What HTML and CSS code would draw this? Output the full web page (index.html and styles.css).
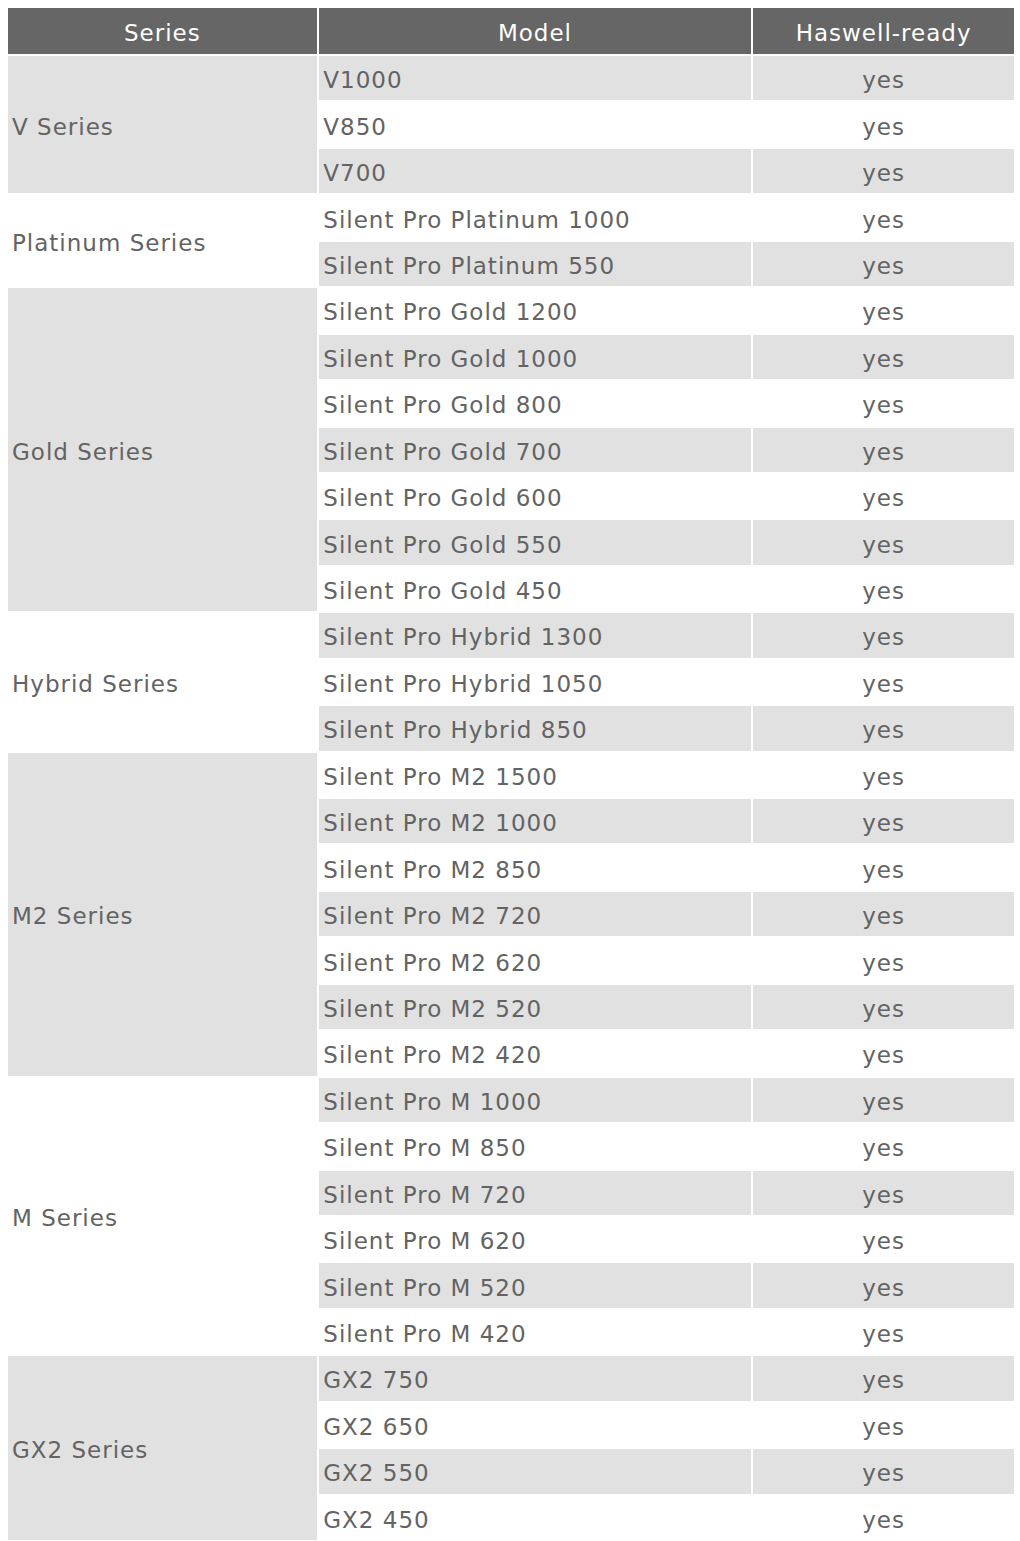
FILE: index.html
```html
<!DOCTYPE html>
<html>
<head>
<meta charset="utf-8">
<link rel="stylesheet" href="styles.css">
</head>
<body>
<div class="tbl">
  <div class="th">Series</div><div class="th">Model</div><div class="th">Haswell-ready</div>

  <div class="series gray s3">V Series</div>
  <div class="model gray">V1000</div><div class="yes gray">yes</div>
  <div class="model">V850</div><div class="yes">yes</div>
  <div class="model gray">V700</div><div class="yes gray">yes</div>

  <div class="series s2">Platinum Series</div>
  <div class="model">Silent Pro Platinum 1000</div><div class="yes">yes</div>
  <div class="model gray">Silent Pro Platinum 550</div><div class="yes gray">yes</div>

  <div class="series gray s7">Gold Series</div>
  <div class="model">Silent Pro Gold 1200</div><div class="yes">yes</div>
  <div class="model gray">Silent Pro Gold 1000</div><div class="yes gray">yes</div>
  <div class="model">Silent Pro Gold 800</div><div class="yes">yes</div>
  <div class="model gray">Silent Pro Gold 700</div><div class="yes gray">yes</div>
  <div class="model">Silent Pro Gold 600</div><div class="yes">yes</div>
  <div class="model gray">Silent Pro Gold 550</div><div class="yes gray">yes</div>
  <div class="model">Silent Pro Gold 450</div><div class="yes">yes</div>

  <div class="series s3">Hybrid Series</div>
  <div class="model gray">Silent Pro Hybrid 1300</div><div class="yes gray">yes</div>
  <div class="model">Silent Pro Hybrid 1050</div><div class="yes">yes</div>
  <div class="model gray">Silent Pro Hybrid 850</div><div class="yes gray">yes</div>

  <div class="series gray s7">M2 Series</div>
  <div class="model">Silent Pro M2 1500</div><div class="yes">yes</div>
  <div class="model gray">Silent Pro M2 1000</div><div class="yes gray">yes</div>
  <div class="model">Silent Pro M2 850</div><div class="yes">yes</div>
  <div class="model gray">Silent Pro M2 720</div><div class="yes gray">yes</div>
  <div class="model">Silent Pro M2 620</div><div class="yes">yes</div>
  <div class="model gray">Silent Pro M2 520</div><div class="yes gray">yes</div>
  <div class="model">Silent Pro M2 420</div><div class="yes">yes</div>

  <div class="series s6">M Series</div>
  <div class="model gray">Silent Pro M 1000</div><div class="yes gray">yes</div>
  <div class="model">Silent Pro M 850</div><div class="yes">yes</div>
  <div class="model gray">Silent Pro M 720</div><div class="yes gray">yes</div>
  <div class="model">Silent Pro M 620</div><div class="yes">yes</div>
  <div class="model gray">Silent Pro M 520</div><div class="yes gray">yes</div>
  <div class="model">Silent Pro M 420</div><div class="yes">yes</div>

  <div class="series gray s4">GX2 Series</div>
  <div class="model gray">GX2 750</div><div class="yes gray">yes</div>
  <div class="model">GX2 650</div><div class="yes">yes</div>
  <div class="model gray">GX2 550</div><div class="yes gray">yes</div>
  <div class="model">GX2 450</div><div class="yes">yes</div>
</div>
</body>
</html>
```

FILE: styles.css
```css
html, body {
  margin: 0;
  padding: 0;
  background: #ffffff;
}
body {
  padding: 8px 0 0 8px;
  font-family: "DejaVu Sans", Verdana, sans-serif;
  font-size: 23px;
  letter-spacing: 1px;
  color: #636363;
}
.tbl {
  display: grid;
  width: 1006px;
  grid-template-columns: 308.7px 431.4px 260.7px;
  grid-template-rows: 46px repeat(32, 44.45px);
  column-gap: 2.6px;
  row-gap: 2px;
}
.tbl > div {
  box-sizing: border-box;
  padding-top: 4px;
}
.th {
  background: #666666;
  color: #ffffff;
  display: flex;
  align-items: center;
  justify-content: center;
}
.series {
  grid-column: 1;
  display: flex;
  align-items: center;
  padding-left: 4px;
}
.model {
  grid-column: 2;
  display: flex;
  align-items: center;
  padding-left: 4px;
}
.yes {
  grid-column: 3;
  display: flex;
  align-items: center;
  justify-content: center;
}
.gray {
  background: #e1e1e1;
}
.s2 { grid-row: span 2; }
.s3 { grid-row: span 3; }
.s4 { grid-row: span 4; }
.s6 { grid-row: span 6; }
.s7 { grid-row: span 7; }
```
